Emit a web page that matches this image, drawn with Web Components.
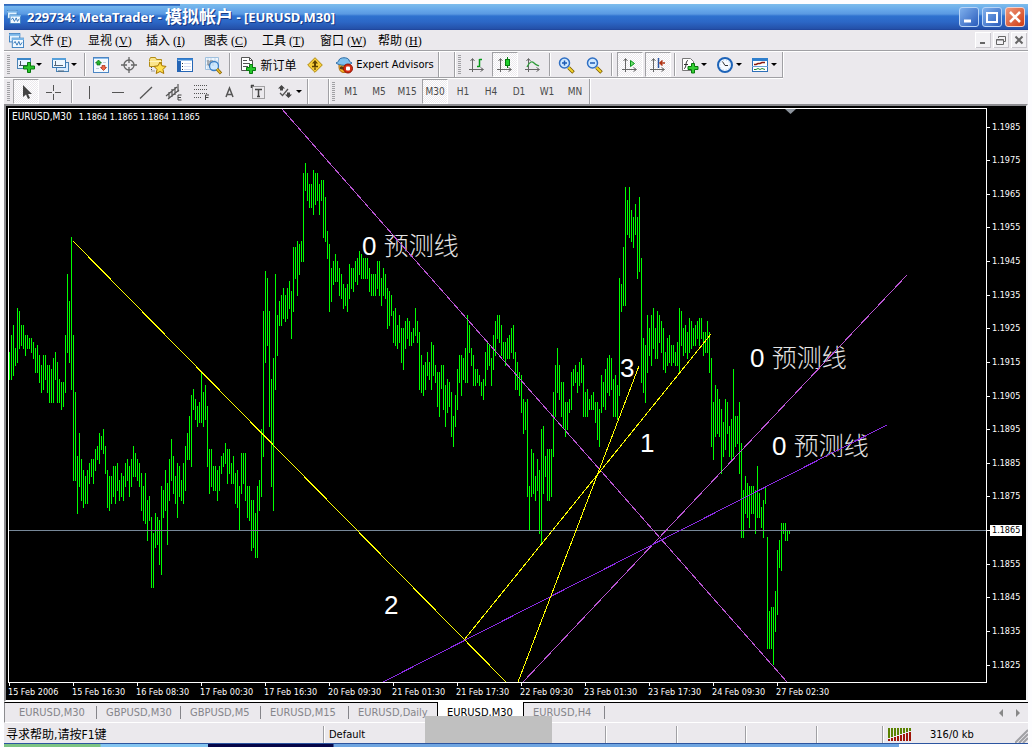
<!DOCTYPE html>
<html lang="zh-CN">
<head>
<meta charset="utf-8">
<title>229734: MetaTrader</title>
<style>
  html, body { margin: 0; height: 100%; background: #fdfdff; }
  body { font: 11px/14px "DejaVu Sans Condensed", "DejaVu Sans", "Noto Sans CJK SC", sans-serif; color: #000; overflow: hidden; }
</style>
</head>
<body>
<mt-window>
  <mt-titlebar slot="title">229734: MetaTrader - <span class="cjk">模拟帐户</span> - [EURUSD,M30]</mt-titlebar>
  <mt-menubar slot="menu"></mt-menubar>
  <mt-toolrow slot="tools" class="first">
    <mt-toolbar>
      <mt-tool icon="newchart" label="New chart" drop></mt-tool>
      <mt-tool icon="profiles" label="Profiles" drop></mt-tool>
      <mt-sep></mt-sep>
      <mt-tool icon="market" label="Market Watch"></mt-tool>
      <mt-tool icon="target" label="Data Window"></mt-tool>
      <mt-tool icon="folder" label="Navigator"></mt-tool>
      <mt-tool icon="terminal" label="Terminal"></mt-tool>
      <mt-tool icon="tester" label="Strategy Tester"></mt-tool>
      <mt-sep></mt-sep>
      <mt-tool icon="order" class="order">新订单</mt-tool>
      <mt-tool icon="diamond" label="MetaEditor"></mt-tool>
      <mt-tool icon="expert" class="expert">Expert Advisors</mt-tool>
    </mt-toolbar>
    <mt-toolbar class="next">
      <mt-tool icon="bars" label="Bar chart"></mt-tool>
      <mt-tool icon="candle" label="Candlesticks" pressed></mt-tool>
      <mt-tool icon="line" label="Line chart"></mt-tool>
      <mt-sep></mt-sep>
      <mt-tool icon="zoomin" label="Zoom in"></mt-tool>
      <mt-tool icon="zoomout" label="Zoom out"></mt-tool>
      <mt-sep class="wide"></mt-sep>
      <mt-tool icon="scroll" label="Auto scroll" pressed></mt-tool>
      <mt-tool icon="shift" label="Chart shift" pressed></mt-tool>
      <mt-sep></mt-sep>
      <mt-tool icon="indicator" label="Indicators" drop></mt-tool>
      <mt-tool icon="clock" label="Periods" drop></mt-tool>
      <mt-tool icon="template" label="Templates" drop></mt-tool>
    </mt-toolbar>
  </mt-toolrow>
  <mt-toolrow slot="tools">
    <mt-toolbar>
      <mt-tool icon="cursor" label="Cursor" pressed></mt-tool>
      <mt-tool icon="cross" label="Crosshair"></mt-tool>
      <mt-sep class="wide"></mt-sep>
      <mt-tool icon="vline" label="Vertical line"></mt-tool>
      <mt-tool icon="hline" label="Horizontal line"></mt-tool>
      <mt-tool icon="trend" label="Trendline"></mt-tool>
      <mt-tool icon="channel" label="Channel"></mt-tool>
      <mt-tool icon="fibo" label="Fibonacci"></mt-tool>
      <mt-tool icon="texta" label="Text"></mt-tool>
      <mt-tool icon="label" label="Text label"></mt-tool>
      <mt-tool icon="arrows" label="Arrows" drop></mt-tool>
    </mt-toolbar>
    <mt-toolbar class="next far">
      <mt-tool class="tf">M1</mt-tool><mt-tool class="tf">M5</mt-tool><mt-tool class="tf">M15</mt-tool>
      <mt-tool class="tf" pressed>M30</mt-tool><mt-tool class="tf">H1</mt-tool><mt-tool class="tf">H4</mt-tool>
      <mt-tool class="tf">D1</mt-tool><mt-tool class="tf">W1</mt-tool><mt-tool class="tf">MN</mt-tool>
    </mt-toolbar>
  </mt-toolrow>
  <mt-chart slot="chart"></mt-chart>
  <mt-tabs slot="tabs"></mt-tabs>
  <mt-status slot="status"></mt-status>
</mt-window>

<script>
const define = (name, html, init) => {
  const t = document.createElement('template');
  t.innerHTML = html;
  customElements.define(name, class extends HTMLElement {
    constructor() {
      super();
      this.attachShadow({ mode: 'open' }).append(t.content.cloneNode(true));
    }
    connectedCallback() { if (init) init.call(this, this.shadowRoot); }
  });
};

const axes = '<path d="M3.5 15V2M1.5 4l2-2.5 2 2.5M0 12.5h14M11.5 10.5l3 2-3 2" fill="none" stroke="#666"/>';
const lens = '<circle cx="6.500" cy="6" r="5" fill="#cfe8ff" stroke="#2f6fc4" stroke-width="1.500"/><path d="M10.500 10.500l5 5" stroke="#7a5a00" stroke-width="3.500"/><path d="M10.500 10.500l4.500 4.500" stroke="#f2d32c" stroke-width="2"/>';
const ICONS = {
  newchart: '<rect x=".500" y="1.500" width="13" height="10" fill="#e8f3ff" stroke="#4a83b5"/><path d="M0 2h14" stroke="#3c87c8" stroke-width="2"/><path d="M3.500 4v5M2 8.500h8" stroke="#456"/><g transform="translate(2 -1)"><path d="M8.500 6.500h3v3.500h4v3h-4v3.500h-3v-3.500h-4v-3h4z" fill="#29c52b" stroke="#07780d"/></g>',
  profiles: '<rect x="4.500" y="5.500" width="12" height="9" fill="#d9ecff" stroke="#4a83b5"/><rect x=".500" y="1.500" width="13" height="9" fill="#eef7ff" stroke="#3a79b4"/><path d="M0 2h14" stroke="#57a0da" stroke-width="2"/><path d="M3.500 4v5M2 8.500h9M6 14h6" stroke="#567"/>',
  market: '<rect x=".500" y=".500" width="15" height="15" fill="#f4faff" stroke="#4d86c4"/><path d="M1 1.500h14" stroke="#8bbdec"/><path d="M5.500 3l3 3h-1.500v2h-3v-2h-1.500z" fill="#23b52c" stroke="#0a6812" stroke-width=".7"/><path d="M10.500 13.500l3-3h-1.500v-2h-3v2h-1.500z" fill="#f06a4a" stroke="#a82812" stroke-width=".7"/><path d="M3 11.500h3M10 5.500h3" stroke="#bcd"/>',
  target: '<circle cx="8" cy="8" r="5" fill="none" stroke="#666" stroke-width="1.300"/><path d="M8 0v6M8 10v6M0 8h6M10 8h6" stroke="#666" stroke-width="1.300"/>',
  folder: '<path d="M.500 2.500l1-2h5l1 2h5v7h-12z" fill="#fbe58a" stroke="#b28c16"/><path d="M.500 4.500h12" stroke="#fff3bd"/><path d="M2.500 10v4h4" stroke="#555" fill="none" stroke-dasharray="1 1"/><path d="M11 5l2 3.800 4 .6-3 3 .8 4.100-3.800-2-3.800 2 .8-4.100-3-3 4-.6z" fill="#ffe050" stroke="#a77500"/>',
  terminal: '<rect x=".500" y="1.500" width="15" height="13" fill="#fff" stroke="#2565b5"/><path d="M0 2.500h16" stroke="#3a86d4" stroke-width="2"/><path d="M2.500 4v10" stroke="#2565b5" stroke-width="3"/><path d="M5 6.500h1M5 9.500h1M5 12.500h1" stroke="#234"/><path d="M7 6.500h7M7 9.500h7M7 12.500h7" stroke="#d4dcf2"/>',
  tester: '<path d="M.500.500h13v12h-13z" fill="#eef6ff" stroke="#9fc0de"/><path d="M3 1v11M6 1v11M10 1v11M1 4h12M1 8h12" stroke="#c5d6e6"/><path d="M3 3v5h2v-4h3v5" stroke="#777" fill="none"/><circle cx="9" cy="9" r="4.500" fill="#c9e7ffcc" stroke="#3a7fc4" stroke-width="1.300"/><path d="M12 12l4 4.500" stroke="#8a6400" stroke-width="3"/><path d="M12 12l3.500 4" stroke="#e6bd2b" stroke-width="1.500"/>',
  order: '<path d="M1.500.500h8l3 3v10h-11z" fill="#fff" stroke="#555"/><path d="M9.500.500v3h3M3 3.500h4M3 6.500h7M3 9.500h5" stroke="#555" fill="none"/><path d="M9.500 7.500h3v3h3v3h-3v3h-3v-3h-3v-3h3z" fill="#27c62c" stroke="#077a0d"/>',
  diamond: '<path d="M8 .700L15.300 8 8 15.300.700 8z" fill="#f8cf3a" stroke="#b08a10"/><path d="M8 3l3 3.500h-2v2.500h-2v-2.500h-2z" fill="#5d4200"/><path d="M5 9.500h6M8 10.500v2.500" stroke="#5d4200" fill="none" stroke-width="1.300"/>',
  expert: '<path d="M3 7h10v3c0 3-2 5.500-5 5.500s-5-2-5-5.500z" fill="#f6b62a" stroke="#b06a10"/><path d="M4 10c2-2 4 0 4 3l-4-1z" fill="#5a3a10"/><path d="M0 6c1-1 3-1 3-3 1-3 9-3 10 0 0 2 2 2 3 3-4 3-12 3-16 0z" fill="#7fc0ee" stroke="#2c6ba4"/><circle cx="12" cy="11.500" r="4.500" fill="#d62d12" stroke="#8d1203"/><rect x="10" y="9.500" width="4" height="4" rx="1" fill="#fff"/>',
  bars: axes + '<path d="M10.500 2v8M10.500 2.500h2.500M8 9.500h2.500" stroke="#069a18" fill="none" stroke-width="1.500"/>',
  candle: axes + '<path d="M10.500 0v11" stroke="#067c10"/><rect x="8.500" y="2.500" width="4" height="6" fill="#1fd02b" stroke="#067c10"/>',
  line: axes + '<path d="M2 10c3-6 5-6 7-4s3 2 5 3" stroke="#2f9b3a" fill="none" stroke-width="1.300"/>',
  zoomin: lens + '<path d="M4 6h5M6.500 3.500v5" stroke="#1c5bb5" stroke-width="1.500"/>',
  zoomout: lens + '<path d="M4 6h5" stroke="#1c5bb5" stroke-width="1.500"/>',
  scroll: axes + '<path d="M8.500 3.500v6l4-3z" fill="#6fe06f" stroke="#07951a"/>',
  shift: axes + '<path d="M8.500 1v10" stroke="#2a56a5" stroke-width="1.500"/><path d="M10 6h5M12.500 3.500l-2.500 2.500 2.500 2.500" stroke="#b03010" fill="none" stroke-width="1.500"/>',
  indicator: '<path d="M.500 1.500h8l3 3v9h-11z" fill="#fff" stroke="#777"/><path d="M6 3.500c-3 0-1 8-4 8M2 7.500h4" stroke="#333" fill="none"/><path d="M9.500 6.500h3v3h3.500v3h-3.500v3.500h-3v-3.500h-3.500v-3h3.500z" fill="#35cf35" stroke="#07780d"/>',
  clock: '<circle cx="8" cy="8" r="7" fill="#f6fbff" stroke="#1d63b8" stroke-width="2"/><circle cx="8" cy="8" r="5" fill="none" stroke="#a8c8e8" stroke-dasharray="1 2"/><path d="M5.500 4.500l2.500 4h3" stroke="#333" fill="none"/>',
  template: '<rect x=".500" y="1.500" width="15" height="13" fill="#fff" stroke="#2e70b8"/><path d="M0 2.500h16" stroke="#2f7fcd" stroke-width="3"/><path d="M0 9.500h16" stroke="#6aa0d8"/><path d="M2 7.500h2l2-1h2l2-1h3" stroke="#8b1c10" fill="none" stroke-width="1.500"/><path d="M2 12.500h2l2-1 2 1 2-1 3 1" stroke="#1e8a30" fill="none"/>',
  cursor: '<path d="M5 1v12l3-2.500 2 4.500 2-1-2-4h4z" fill="#444"/>',
  cross: '<path d="M0 8.500h6M9 8.500h6M7.500 1v6M7.500 10v6" stroke="#555"/>',
  vline: '<path d="M7.500 2v13" stroke="#555"/>',
  hline: '<path d="M2 8.500h12" stroke="#555"/>',
  trend: '<path d="M2 14.500L14 3" stroke="#555" stroke-width="1.300"/>',
  channel: '<path d="M0 12L11 3M2 15L13 6M3 8v6M6 5v8M9 3v8M12 0v8" stroke="#555" stroke-width="1.200"/><path d="M15.500 11h-3.500v5h3.500M12 13.500h3" stroke="#444" fill="none"/>',
  fibo: '<path d="M0 1.500h14M0 5.500h14M0 9.500h14M0 13.500h8" stroke="#555" stroke-dasharray="1 1"/><path d="M11.500 16v-5h3.500M11 13.500h3.500" stroke="#444" fill="none"/>',
  texta: '<path d="M4 13L7.500 4L11 13M5.500 10.500h4" stroke="#555" stroke-width="1.500" fill="none"/>',
  label: '<rect x="2.500" y="2.500" width="12" height="12" fill="none" stroke="#555" stroke-dasharray="1 1"/><path d="M1 1.500h3M1.500 1v3M5 5.500h7M8.500 5v8M7 12.500h3" stroke="#444" fill="none" stroke-width="1.500"/>',
  arrows: '<path d="M4.500 1L8 4.500H6v2H3v-2H1zM11.500 14L8 10.500h2v-2h3v2h2z" fill="#444"/><path d="M3 9l2.500 2.500L11 5" stroke="#555" fill="none" stroke-width="1.300"/>',
  app: '<rect x=".500" y=".500" width="11" height="9" fill="#e5f3ff" stroke="#3c7fc0"/><path d="M1 1.500h10" stroke="#fff"/><path d="M0 2h12" stroke="#7ab6e8" stroke-width="2"/><rect x="3.500" y="5.500" width="12" height="10" fill="#f2f9ff" stroke="#3c7fc0"/><path d="M3 6.500h13" stroke="#7ab6e8" stroke-width="2"/><path d="M5 11l1.500-2 2 4 2-4 1.500 4 2-3" stroke="#2a6fb4" fill="none"/>'
};
const svg = (n, s = 16) => `<svg width="${s}" height="${s}" viewBox="0 0 16 16" overflow="visible" aria-hidden="true">${ICONS[n]}</svg>`;

define('mt-window', `<style>
  :host { display: flex; flex-direction: column; height: 100vh; box-sizing: border-box; padding: 4px 4px 0; }
  .body { display: flex; flex-direction: column; flex: 1; min-height: 0; background: #ebe9ed; }
  .tools { border-top: 1px solid #a0a0a4; box-shadow: inset 0 1px #fff; padding-top: 1px; }
  .task { height: 4px; box-sizing: content-box; flex: none; border-top: 1px solid #2c55a0; margin-bottom: -1px; background: linear-gradient(90deg,
    #7dc383 0 96px, #84c5f0 97px 204px, #060648 204px 329px, #6fa5e0 330px 895px, #fdfdff 895px); }
</style>
<slot name="title"></slot>
<div class="body"><slot name="menu"></slot><div class="tools"><slot name="tools"></slot></div>
<slot name="chart"></slot><slot name="tabs"></slot><slot name="status"></slot></div>
<div class="task"></div>`);

define('mt-titlebar', `<style>
  :host { display: flex; align-items: center; height: 26px; flex: none; box-sizing: border-box; padding: 0 3px 0 3px; gap: 4px;
    background: linear-gradient(#2a5fb4, #3f7fcf) 0 0 / 176px 2px no-repeat, linear-gradient(#7cbcec 0, #66a7ea 6px, #5a99e2 10px, #2f72cf 12px, #2c67c6 18px, #2450a8 25px, #1d3f94);
    color: #fff; font: bold 13px/20px "Noto Sans", "Noto Sans CJK SC", sans-serif; text-shadow: 1px 1px #183a86; }
  .text { flex: 1; white-space: pre; }
  ::slotted(.cjk) { font-size: 17px; line-height: 20px; vertical-align: -1px; }
  .icon { display: flex; width: 16px; }
  .buttons { display: flex; gap: 3px; }
  button { width: 20px; height: 20px; padding: 0; border: 1px solid #b8d4f6; border-radius: 3px; background: linear-gradient(135deg, #7fb0ec, #2a5cbc); display: grid; place-items: center; }
  button.close { background: linear-gradient(135deg, #f0987c, #cf3c12); border-color: #f3d2cc; }
</style>
<span class="icon">${svg('app', 14)}</span><span class="text"><slot></slot></span>
<span class="buttons">
<button aria-label="Minimize"><svg width="14" height="14"><path d="M2 11h7" stroke="#fff" stroke-width="3"/></svg></button>
<button aria-label="Maximize"><svg width="14" height="14"><path d="M2 3v9h10V3M1 3h12" fill="none" stroke="#fff" stroke-width="2"/></svg></button>
<button class="close" aria-label="Close"><svg width="14" height="14"><path d="M2 2l10 10M12 2L2 12" stroke="#fff" stroke-width="2.500"/></svg></button>
</span>`);

define('mt-menubar', `<style>
  :host { display: flex; align-items: center; height: 20px; flex: none; }
  .icon { display: flex; width: 26px; box-sizing: border-box; padding-left: 5px; }
  button { all: unset; width: 58px; font: 12px/18px "Noto Sans CJK SC", sans-serif; white-space: pre; }
  .key { font: 12px/18px "Liberation Serif", serif; padding-left: 3px; }
  .mdi { margin-left: auto; display: flex; gap: 1px; }
  .mdi button { display: grid; place-items: center; width: 16px; height: 16px; background: #f2f1f4; box-shadow: inset 1px 1px #fff, inset -1px -1px #c8c6cc; margin-right: 1px; }
</style>
<span class="icon">${svg('app', 15)}</span>
${[['文件', 'F'], ['显视', 'V'], ['插入', 'I'], ['图表', 'C'], ['工具', 'T'], ['窗口', 'W'], ['帮助', 'H']]
  .map(([t, k]) => `<button>${t}<span class="key">(<u>${k}</u>)</span></button>`).join('')}
<span class="mdi">
<button aria-label="Minimize"><svg width="10" height="10"><path d="M2 8h5" stroke="#666" stroke-width="2"/></svg></button>
<button aria-label="Restore"><svg width="10" height="10"><path d="M2.500 3V1.500h7v5H8M.500 4.500h7v5h-7zM.500 5h7" fill="none" stroke="#666"/></svg></button>
<button aria-label="Close"><svg width="10" height="10"><path d="M1.500 1.500l7 7M8.500 1.500l-7 7" stroke="#666" stroke-width="2"/></svg></button>
</span>`);

define('mt-toolrow', `<style>
  :host { display: flex; height: 25px; width: max-content; }
  :host(.first) { border-bottom: 1px solid #a0a0a4; box-shadow: 0 1px #fff; margin-bottom: 1px; }
</style><slot></slot>`);

define('mt-toolbar', `<style>
  :host { display: flex; align-items: stretch; padding-left: 3px; border-right: 1px solid #a0a0a4; box-shadow: 1px 0 #fff; }
  :host(.next) { margin-left: 15px; padding-left: 3px; border-left: 1px solid #a0a0a4; box-shadow: inset 1px 0 #fff, 1px 0 #fff; }
  :host(.far) { margin-left: 20px; }
  .grip { width: 3px; margin: 3px 2px 3px 0; background: repeating-linear-gradient(#a0a0a4 0 1px, transparent 1px 2px); }
</style><span class="grip"></span><slot></slot>`);

define('mt-sep', `<style>
  :host { display: block; width: 1px; margin: 1px 2px; background: #a0a0a4; box-shadow: 1px 0 #fff; }
  :host(.wide) { margin: 1px 4px 1px 3px; }
</style>`);

define('mt-tool', `<style>
  :host { display: flex; width: 28px; box-sizing: border-box; padding: 0 1px; }
  :host([drop]) { width: 35px; }
  :host(.order) { width: 69px; } :host(.expert) { width: 109px; }
  button { all: unset; box-sizing: border-box; flex: 1; display: flex; align-items: center; justify-content: center; border: 1px solid transparent; white-space: nowrap; }
  :host([drop]) button { justify-content: flex-start; padding-left: 3px; gap: 3px; }
  :host(.order) button, :host(.expert) button { gap: 4px; padding-left: 3px; font-size: 11px; }
  :host(.order) button { font: 12px/16px "Noto Sans CJK SC", sans-serif; padding-left: 4px; }
  :host(.tf) button { font-size: 10px; color: #4a4a4a; }
  :host([pressed]) button { border-color: #a0a0a4 #fff #fff #a0a0a4; background: repeating-conic-gradient(#fff 0 25%, #ebe9ed 0 50%) 0 0 / 2px 2px; }
  svg { flex: none; }
</style><button></button>`, function (root) {
  const b = root.querySelector('button'), icon = this.getAttribute('icon'), label = this.getAttribute('label');
  if (label) b.setAttribute('aria-label', label);
  b.innerHTML = (icon ? svg(icon) : '') + (label ? '' : '<slot></slot>') +
    (this.hasAttribute('drop') ? '<svg width="6" height="4" aria-hidden="true"><path d="M0 0h6L3 3z"/></svg>' : '');
});

/* High,low screen levels of consecutive half-hour bars, two pixels apart. */
const BARS = `352,380 335,380 325,376 348,366 308,363 311,349 325,346 325,349 335,356 335,349 338,349 338,353 342,359 348,373 345,373 355,383 365,393 355,390 355,380 365,393 365,403 369,403 358,403 352,380 362,403 379,403 382,410 382,407 335,393 274,353 301,363 237,390 335,481 392,481
456,514 433,487 459,501 470,508 476,504 470,504 463,484 459,477 459,484 449,471 446,460 433,464 436,450 429,454 446,474 470,508 476,511 476,504 466,497 466,504 463,491 480,501 473,497 476,501 463,487 459,481 466,497 459,487 446,477 453,477 459,481 463,487 473,511 486,521 473,524 500,541 496,521 517,588 533,588 513,548 517,545 520,565 486,575 490,518 470,511 483,545 459,501 439,481 456,494 476,504 463,518 466,497 480,501 463,504 446,491 433,460 416,460 395,467 389,410 399,420 406,427 402,423 372,423 392,427 385,420 406,467 449,494 449,487 466,491 466,491 470,501 466,491 456,474 453,467 443,464 449,484 449,474 463,484 456,484 473,504 470,508 486,531 453,494 453,484 453,501 486,518 486,521 500,551 500,548 513,558 486,558 480,511 429,497
311,457 271,363 278,346 311,427 379,487 358,511 274,390 315,356 301,326 295,326 288,319 295,322 288,319 281,309 291,339 247,312 247,279 241,296 244,275 241,262 173,262 163,191 173,201 184,208 184,208 170,215 173,205 173,201 184,215 180,201 180,238 197,242 231,259 244,312 268,302 261,285 254,282 261,282 268,296 274,299 284,309 288,306 284,312 264,299 268,289 268,292 261,282 258,285 251,275 254,279 258,279 258,279 258,279 268,292 274,296 274,296 274,296 261,289 261,296 278,306 268,296 274,299 288,329 291,326 295,316 311,343 308,346 325,349 315,343 328,363 328,370 321,349 318,339 321,346 332,346 328,343 308,336 321,343 332,390 355,393 365,396 362,390 352,376 362,380 342,390 345,376 365,383 372,407 372,417 365,389 365,410 385,427 379,413 382,407 392,437 416,447 395,427 369,410 355,383 355,396 358,380 348,383 315,383 325,353 348,366 355,386 369,386 369,383 375,386 382,396 379,400 352,386 343,370 345,366 358,386 335,370 321,356 315,339 315,343
325,356 342,359 342,366 338,359 335,359 328,353 325,359 352,390 362,390 372,396 375,413 399,434 402,430 399,497 486,531 449,497 453,494 476,501 459,491 470,534 429,545 426,494 456,477 449,501 449,501 449,497 392,457 365,417 348,393 365,400 382,417 382,429 402,437 402,430 399,413 372,410 369,386 365,383 372,393 362,386 358,383 365,417 392,417 389,417 399,410 395,410 392,410 402,423 402,440 409,447 375,413 382,407 369,410 358,393 355,396 358,390 379,417 375,417 385,420 278,396 284,312 247,306 187,306 200,235 187,238 210,242 217,248 204,235 217,279 197,272 258,383 338,393 345,403 315,373 328,356 315,366 308,349 328,359 311,359 315,343 321,353 328,370 352,373 338,366 335,363 345,366 345,363 352,366 342,366 308,373 311,346 328,356 325,353 332,359 318,353 321,349 328,346 325,346 321,339 318,346 318,339 332,356 332,353 321,353 332,373 358,447 402,460 385,437 389,434 399,437 409,474 422,457 399,450 402,434 426,457 419,460 369,457 416,447 416,444 402,474 443,538
490,538 476,514 483,518 486,528 486,514 486,514 490,534 466,518 493,518 507,528 500,538 487,504 537,649 611,649 607,649 607,665 591,632 550,615 540,568 523,571 523,534 523,541 530,541 530,534`
  .split(/\s+/).map((s, i) => { const [h, l] = s.split(','); return `M${9.5 + 2 * i} ${h}V${l}`; }).join('');
const PRICES = Array.from({ length: 17 }, (_, i) => (1.1985 - i * 0.001).toFixed(4));
const TIMES = ['15 Feb 2006', '15 Feb 16:30', '16 Feb 08:30', '17 Feb 00:30', '17 Feb 16:30', '20 Feb 09:30', '21 Feb 01:30', '21 Feb 17:30', '22 Feb 09:30', '23 Feb 01:30', '23 Feb 17:30', '24 Feb 09:30', '27 Feb 02:30'];

define('mt-chart', `<style>
  :host { display: grid; flex: 1; min-height: 0; grid-template: minmax(0, 1fr) 17px / minmax(0, 1fr) 39px; background: #000; color: #fff;
    border: 2px solid; border-color: #8c8c90 #f4f4f6 #fff #8c8c90; padding: 2px 0 0 2px; font-size: 9px; line-height: 12px; }
  .plot { border: 1px solid #fff; position: relative; overflow: hidden; }
  .plot svg { display: block; width: 100%; height: 100%; }
  .info { position: absolute; left: 3px; top: 2px; display: flex; gap: 7px; align-items: baseline; white-space: pre; }
  .info b { font-weight: normal; font-size: 10px; }
  .note { font: 26px "Liberation Sans", "Noto Sans CJK SC", sans-serif; fill: #fff; white-space: pre; }
  .note .cjk { font-family: "Noto Sans CJK SC", sans-serif; font-weight: 300; font-size: 25px; fill: #e4e4e4; }
  .prices { display: flex; flex-direction: column; justify-content: space-between; padding: 13px 0 12px; }
  .prices div { display: flex; align-items: center; height: 12px; }
  .prices div::before { content: ""; width: 3px; height: 1px; background: #fff; }
  .prices span { padding: 0 2px; line-height: 11px; }
  .prices .now span { background: #fff; color: #000; }
  .times { display: grid; grid-auto-flow: column; grid-auto-columns: 64px; justify-content: start; white-space: nowrap; overflow: hidden; grid-column: 1 / 3; }
  .times div::before { content: ""; display: block; width: 1px; height: 3px; margin-left: 1px; background: #fff; }
</style>
<div class="plot">
<svg><g transform="translate(-9 -109)" fill="none">
  <path d="${BARS}" stroke="#00ff00" shape-rendering="crispEdges"/>
  <text class="note" x="362" y="255">0 <tspan class="cjk">预测线</tspan></text>
  <text class="note" x="750" y="367">0 <tspan class="cjk">预测线</tspan></text>
  <text class="note" x="772" y="455">0 <tspan class="cjk">预测线</tspan></text>
  <text class="note" x="620" y="377">3</text>
  <text class="note" x="640" y="452">1</text>
  <text class="note" x="384" y="614">2</text>
  <path d="M9 530.500H6000" stroke="#778899"/>
  <g shape-rendering="crispEdges">
  <path d="M281 108L787 682M523 682L907 275" stroke="#ba55d3"/>
  <path d="M383 682L887 425" stroke="#8a2be2"/>
  <path d="M73 241L506 682M464 640L711 334M518 682L639 366" stroke="#ffff00"/>
  </g>
  <path d="M785 109h11l-5.500 5z" fill="#8c939c"/>
</g></svg>
<span class="info"><b>EURUSD,M30</b><span>1.1864 1.1865 1.1864 1.1865</span></span>
</div>
<div class="prices">${PRICES.map(p => `<div${p === '1.1865' ? ' class="now"' : ''}><span>${p}</span></div>`).join('')}</div>
<div class="times">${TIMES.map(t => `<div>${t}</div>`).join('')}</div>`);

define('mt-tabs', `<style>
  :host { display: flex; align-items: stretch; height: 19px; flex: none; border-top: 1px solid #000; border-bottom: 1px solid #fff; border-left: 1px solid #8c8c90; }
  button { all: unset; box-sizing: border-box; color: #85858a; padding: 0 9px; display: flex; align-items: center; position: relative; }
  button:first-of-type { padding-left: 14px; }
  button::after { content: ""; position: absolute; right: 0; top: 3px; height: 13px; width: 1px; background: #85858a; }
  button[aria-selected="true"] { background: #fff; color: #000; border: solid #000; border-width: 0 1px; margin-top: -1px; padding-top: 1px; }
  button[aria-selected="true"]::after, button.before::after { display: none; }
  .nav { margin-left: auto; display: flex; align-items: center; gap: 13px; padding-right: 8px; }
  .nav button, .nav button:first-of-type { padding: 0; } .nav button::after { display: none; }
</style>
${[['EURUSD,M30', 92], ['GBPUSD,M30', 84], ['GBPUSD,M5', 80], ['EURUSD,M15', 88], ['EURUSD,Daily', 88], ['EURUSD,M30', 87], ['EURUSD,H4', 81]]
  .map(([t, w], i) => `<button role="tab" style="width:${w}px" class="${i === 4 ? 'before' : ''}" aria-selected="${i === 5}">${t}</button>`).join('')}
<span class="nav"><button aria-label="Previous"><svg width="4" height="8"><path d="M4 0v8L0 4z" fill="#888"/></svg></button>
<button aria-label="Next"><svg width="4" height="8"><path d="M0 0v8l4-4z" fill="#888"/></svg></button></span>`);

define('mt-status', `<style>
  :host { display: flex; height: 20px; flex: none; position: relative; align-items: stretch; }
  div { display: flex; align-items: center; box-sizing: border-box; padding-left: 5px; margin-top: 3px; border-left: 1px solid #a0a0a4; box-shadow: inset 1px 0 #fff; white-space: nowrap; }
  .help { flex: 1; border: 0; box-shadow: none; padding-left: 2px; font: 12px/16px "DejaVu Sans Condensed", "Noto Sans CJK SC", sans-serif; }
  .patch { position: absolute; right: 476px; bottom: 0; width: 127px; height: 27px; margin: 0; padding: 0; border: 0; box-shadow: none; background: #c0c0c0; }
  .traffic { gap: 18px; flex: none; }
  .size { align-self: flex-end; }
</style>
<div class="help">寻求帮助,请按F1键</div>
<div style="width:282px">Default</div><div style="width:71px"></div><div style="width:69px"></div><div style="width:71px"></div><div style="width:66px"></div>
<div class="traffic" style="width:133px"><svg width="24" height="13" shape-rendering="crispEdges">
${Array.from({ length: 8 }, (_, i) => `<path d="M${i * 3 + 1} 0v${10 - i}" stroke="#5a8200" stroke-width="2"/><path d="M${i * 3 + 1} ${11 - i}V13" stroke="#a01408" stroke-width="2"/>`).join('')}</svg><span>316/0 kb</span></div>
<svg class="size" width="13" height="14"><path d="M0 14L13 1M4 14L13 5M8 14L13 9" stroke="#a0a0a4" stroke-width="2"/></svg>
<div class="patch"></div>`);
</script>
</body>
</html>
